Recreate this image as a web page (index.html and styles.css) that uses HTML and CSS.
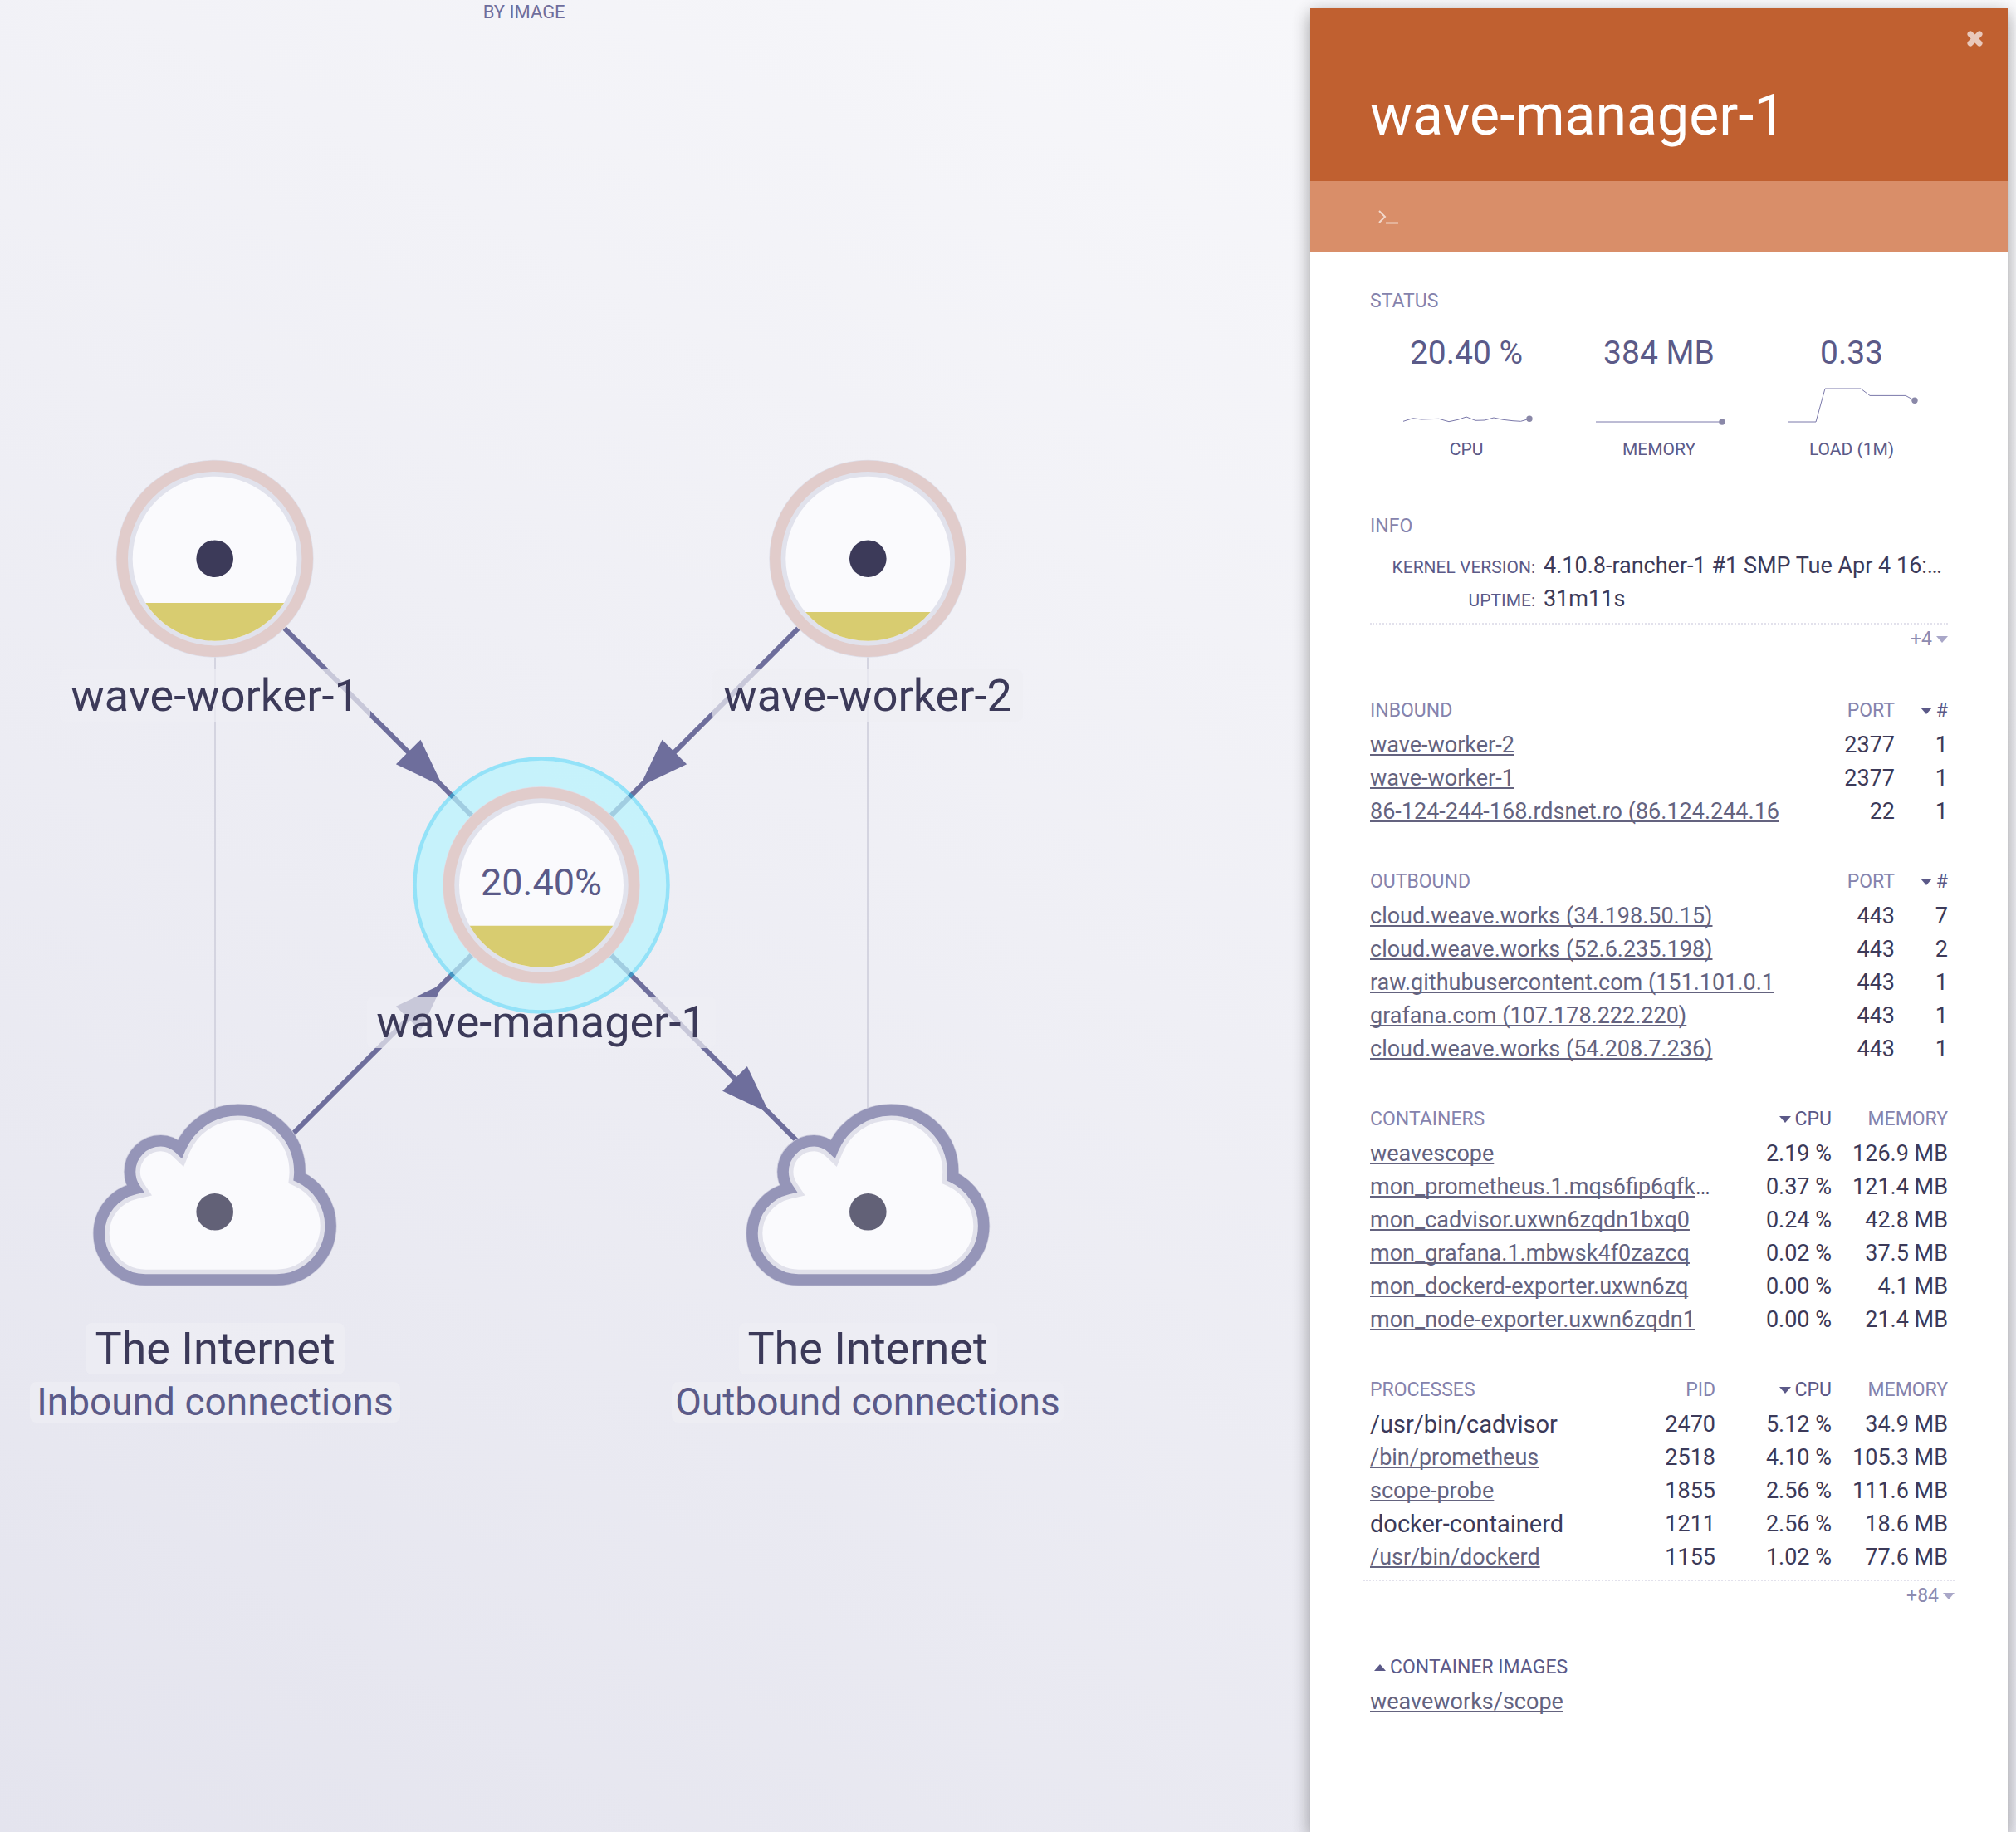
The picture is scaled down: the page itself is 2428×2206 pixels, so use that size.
FILE: index.html
```html
<!DOCTYPE html>
<html lang="en">
<head>
<meta charset="utf-8">
<title>wave-manager-1</title>
<link rel="stylesheet" href="styles.css">
</head>
<body>
<main class="app">
  <section class="graph" aria-label="Hosts">
    <nav class="topologies"><button type="button" class="topology">BY IMAGE</button></nav>
    <svg class="canvas" viewBox="0 0 1578 2206" role="img" aria-label="Host topology">
      <defs>
        <path id="cloud" d="M-1.25 .233Q-1.25 .44-1.104 .587-.957 .733-.75 .733H.667Q.908 .733 1.079 .562 1.25 .391 1.25 .15 1.25-.022 1.158-.164 1.065-.307 .914-.377 .917-.404 .917-.433 .917-.71 .722-.905 .527-1.1 .25-1.1 .041-1.1-.129-.984-.299-.867-.377-.68-.467-.767-.583-.767-.721-.767-.819-.669-.917-.571-.917-.433-.917-.333-.861-.25-1.033-.21-1.141-.076-1.25 .058-1.25 .233Z"/>
        <clipPath id="cloud-clip"><use href="#cloud"/></clipPath>
        <path id="arrow" d="M59 0L0-21V21Z"/>
        <g id="host">
          <circle class="halo" r="119"/>
          <circle class="host-ring" r="111.5"/>
          <circle class="face" r="99"/>
        </g>
        <g id="internet">
          <g transform="scale(111.5)">
            <use href="#cloud" class="cloud-halo"/>
            <use href="#cloud" class="face"/>
            <g clip-path="url(#cloud-clip)"><use href="#cloud" class="cloud-shadow"/></g>
            <use href="#cloud" class="cloud-border"/>
          </g>
          <circle class="cloud-dot" r="22.3"/>
        </g>
      </defs>

      <g class="thin-edges">
        <path d="M259 673V1459M1045 673V1459"/>
      </g>
      <g class="edges">
        <path d="M258.7 672.7L1045.3 1459.3M1045.3 672.7L258.7 1459.3"/>
        <use href="#arrow" transform="translate(491.7 905.5) rotate(45)"/>
        <use href="#arrow" transform="translate(812.3 905.5) rotate(135)"/>
        <use href="#arrow" transform="translate(491.7 1226.5) rotate(-45)"/>
        <use href="#arrow" transform="translate(885 1298.8) rotate(45)"/>
      </g>

      <g class="label-boxes">
        <rect x="72" y="806" width="374" height="63" rx="8"/>
        <rect x="858" y="806" width="374" height="63" rx="8"/>
        <rect x="442" y="1200" width="420" height="62" rx="8"/>
        <rect x="103" y="1593" width="312" height="62" rx="8"/>
        <rect x="36" y="1664" width="446" height="49" rx="8"/>
        <rect x="890" y="1593" width="311" height="62" rx="8"/>
        <rect x="809" y="1664" width="472" height="49" rx="8"/>
      </g>

      <g transform="translate(258.7 672.7)">
        <use href="#host"/>
        <path class="gauge" d="M-83.4 53.3H83.4A99 99 0 0 1-83.4 53.3Z"/>
        <circle class="host-dot" r="22.3"/>
      </g>
      <g transform="translate(1045.3 672.7)">
        <use href="#host"/>
        <path class="gauge" d="M-75.3 64.3H75.3A99 99 0 0 1-75.3 64.3Z"/>
        <circle class="host-dot" r="22.3"/>
      </g>
      <g transform="translate(652 1066)">
        <circle class="selection" r="150.3"/>
        <circle class="selection-ring" r="152.5"/>
        <use href="#host"/>
        <path class="gauge" d="M-86.2 48.7H86.2A99 99 0 0 1-86.2 48.7Z"/>
      </g>
      <use href="#internet" transform="translate(258.7 1459.3)"/>
      <use href="#internet" transform="translate(1045.3 1459.3)"/>

      <text class="node-value" x="652" y="1078">20.40%</text>
      <text class="node-name" x="259" y="856">wave-worker-1</text>
      <text class="node-name" x="1045" y="856">wave-worker-2</text>
      <text class="node-name" x="652" y="1249">wave-manager-1</text>
      <text class="node-name" x="259" y="1642">The Internet</text>
      <text class="node-minor" x="259" y="1704">Inbound connections</text>
      <text class="node-name" x="1045" y="1642">The Internet</text>
      <text class="node-minor" x="1045" y="1704">Outbound connections</text>
    </svg>
  </section>

  <aside class="details">
    <header class="details-header">
      <button type="button" class="close" aria-label="Close">
        <svg width="19" height="19" viewBox="0 0 19 19"><path d="M4 4L15 15M15 4L4 15"/></svg>
      </button>
      <h1>wave-manager-1</h1>
    </header>
    <div class="controls">
      <button type="button" class="terminal" aria-label="Open terminal">
        <svg width="26" height="18" viewBox="0 0 26 18"><path d="M1 2L8 9L1 16M9 16.5H24"/></svg>
      </button>
    </div>

    <div class="content">
      <section class="status">
        <h2>STATUS</h2>
        <div class="metrics">
          <div class="metric">
            <div class="metric-value">20.40 %</div>
            <svg class="spark" width="160" height="48" viewBox="0 0 160 48"><path d="M4 43.3L15.6 39.7L26 41L47 40.3L59 43.7L70 41.3L80 38L91 42.3L102 42L113 39L124 41.3L136 42.7L145.5 43.3L156 40.3"/><circle cx="156" cy="40.3" r="3.7"/></svg>
            <div class="metric-name">CPU</div>
          </div>
          <div class="metric">
            <div class="metric-value">384 MB</div>
            <svg class="spark" width="160" height="48" viewBox="0 0 160 48"><path d="M4 44H156"/><circle cx="156" cy="44" r="3.7"/></svg>
            <div class="metric-name">MEMORY</div>
          </div>
          <div class="metric">
            <div class="metric-value">0.33</div>
            <svg class="spark" width="160" height="48" viewBox="0 0 160 48"><path d="M4 44H37L48 4H91L102 12.4H145L156 18.3"/><circle cx="156" cy="18.3" r="3.7"/></svg>
            <div class="metric-name">LOAD (1M)</div>
          </div>
        </div>
      </section>

      <section>
        <h2>INFO</h2>
        <dl class="info">
          <dt>KERNEL VERSION:</dt><dd>4.10.8-rancher-1 #1 SMP Tue Apr 4 16:…</dd>
          <dt>UPTIME:</dt><dd>31m11s</dd>
        </dl>
        <button type="button" class="more">+4<svg class="caret" width="14" height="8" viewBox="0 0 14 8"><path d="M0 0H14L7 8Z"/></svg></button>
      </section>

      <table>
        <colgroup><col><col class="col-port"><col class="col-count"></colgroup>
        <thead><tr><th>INBOUND</th><th><button type="button">PORT</button></th><th class="sorted"><button type="button"><svg class="caret" width="14" height="8" viewBox="0 0 14 8"><path d="M0 0H14L7 8Z"/></svg>#</button></th></tr></thead>
        <tbody>
          <tr><td><a href="#">wave-worker-2</a></td><td>2377</td><td>1</td></tr>
          <tr><td><a href="#">wave-worker-1</a></td><td>2377</td><td>1</td></tr>
          <tr><td><a href="#">86-124-244-168.rdsnet.ro (86.124.244.16</a></td><td>22</td><td>1</td></tr>
        </tbody>
      </table>

      <table>
        <colgroup><col><col class="col-port"><col class="col-count"></colgroup>
        <thead><tr><th>OUTBOUND</th><th><button type="button">PORT</button></th><th class="sorted"><button type="button"><svg class="caret" width="14" height="8" viewBox="0 0 14 8"><path d="M0 0H14L7 8Z"/></svg>#</button></th></tr></thead>
        <tbody>
          <tr><td><a href="#">cloud.weave.works (34.198.50.15)</a></td><td>443</td><td>7</td></tr>
          <tr><td><a href="#">cloud.weave.works (52.6.235.198)</a></td><td>443</td><td>2</td></tr>
          <tr><td><a href="#">raw.githubusercontent.com (151.101.0.1</a></td><td>443</td><td>1</td></tr>
          <tr><td><a href="#">grafana.com (107.178.222.220)</a></td><td>443</td><td>1</td></tr>
          <tr><td><a href="#">cloud.weave.works (54.208.7.236)</a></td><td>443</td><td>1</td></tr>
        </tbody>
      </table>

      <table>
        <colgroup><col><col class="col-metric"><col class="col-metric"></colgroup>
        <thead><tr><th>CONTAINERS</th><th class="sorted"><button type="button"><svg class="caret" width="14" height="8" viewBox="0 0 14 8"><path d="M0 0H14L7 8Z"/></svg>CPU</button></th><th><button type="button">MEMORY</button></th></tr></thead>
        <tbody>
          <tr><td><a href="#">weavescope</a></td><td>2.19 %</td><td>126.9 MB</td></tr>
          <tr><td><a href="#">mon_prometheus.1.mqs6fip6qfk</a>…</td><td>0.37 %</td><td>121.4 MB</td></tr>
          <tr><td><a href="#">mon_cadvisor.uxwn6zqdn1bxq0</a></td><td>0.24 %</td><td>42.8 MB</td></tr>
          <tr><td><a href="#">mon_grafana.1.mbwsk4f0zazcq</a></td><td>0.02 %</td><td>37.5 MB</td></tr>
          <tr><td><a href="#">mon_dockerd-exporter.uxwn6zq</a></td><td>0.00 %</td><td>4.1 MB</td></tr>
          <tr><td><a href="#">mon_node-exporter.uxwn6zqdn1</a></td><td>0.00 %</td><td>21.4 MB</td></tr>
        </tbody>
      </table>

      <section>
        <table>
          <colgroup><col><col class="col-metric"><col class="col-metric"><col class="col-metric"></colgroup>
          <thead><tr><th>PROCESSES</th><th><button type="button">PID</button></th><th class="sorted"><button type="button"><svg class="caret" width="14" height="8" viewBox="0 0 14 8"><path d="M0 0H14L7 8Z"/></svg>CPU</button></th><th><button type="button">MEMORY</button></th></tr></thead>
          <tbody>
            <tr><td class="plain">/usr/bin/cadvisor</td><td>2470</td><td>5.12 %</td><td>34.9 MB</td></tr>
            <tr><td><a href="#">/bin/prometheus</a></td><td>2518</td><td>4.10 %</td><td>105.3 MB</td></tr>
            <tr><td><a href="#">scope-probe</a></td><td>1855</td><td>2.56 %</td><td>111.6 MB</td></tr>
            <tr><td class="plain">docker-containerd</td><td>1211</td><td>2.56 %</td><td>18.6 MB</td></tr>
            <tr><td><a href="#">/usr/bin/dockerd</a></td><td>1155</td><td>1.02 %</td><td>77.6 MB</td></tr>
          </tbody>
        </table>
        <button type="button" class="more more-wide">+84<svg class="caret" width="14" height="8" viewBox="0 0 14 8"><path d="M0 0H14L7 8Z"/></svg></button>
      </section>

      <table>
        <thead><tr><th class="sorted"><button type="button"><svg class="caret" width="14" height="8" viewBox="0 0 14 8"><path d="M0 8H14L7 0Z"/></svg>CONTAINER IMAGES</button></th></tr></thead>
        <tbody><tr><td><a href="#">weaveworks/scope</a></td></tr></tbody>
      </table>
    </div>
  </aside>
</main>
</body>
</html>
```
FILE: styles.css
```css
* { box-sizing: border-box; }

body {
  margin: 0;
  font-family: Roboto, "Liberation Sans", sans-serif;
  font-size: 27px;
  line-height: 40px;
  color: #3c3a59;
}

button {
  margin: 0;
  padding: 0;
  border: 0;
  background: none;
  font: inherit;
  color: inherit;
  cursor: pointer;
}

.app {
  display: grid;
  grid-template-columns: minmax(0, 1fr) minmax(0, 840px);
  min-height: 100vh;
  padding-right: 10px;
  background: linear-gradient(30deg, #e4e4ee 0%, #fafafc 100%);
}

/* Topology graph */
.graph { display: grid; align-items: start; }
.topologies, .canvas { grid-area: 1 / 1; }
.topologies { width: 80%; text-align: center; font-size: 22px; line-height: 30px; color: #6e6d9c; }
.topology { display: block; margin: 0 auto; }
.canvas { display: block; width: 100%; }

.thin-edges path { fill: none; stroke: #d4d4e0; stroke-width: 2; }
.edges { fill: #6e6e9c; }
.edges path { stroke: none; }
.edges > path { fill: none; stroke: #6e6e9c; stroke-width: 6; }
.label-boxes { fill: rgba(238, 238, 244, .7); }
.halo { fill: #dfdfe9; }
.host-ring { fill: #e1e2ec; stroke: #e1cccb; stroke-width: 13.6; }
.face { fill: #fafafd; }
.gauge { fill: #d8cc70; }
.host-dot { fill: #3c3a59; }
.cloud-dot { fill: #626177; }
.cloud-halo { fill: none; stroke: #cfcfdf; stroke-width: .136; }
.cloud-shadow { fill: none; stroke: #e1e1eb; stroke-width: .222; }
.cloud-border { fill: none; stroke: #9595b8; stroke-width: .122; }
.selection { fill: rgba(182, 244, 254, .71); }
.selection-ring { fill: none; stroke: rgba(0, 207, 255, .38); stroke-width: 4.5; }

.node-name, .node-minor, .node-value { text-anchor: middle; }
.node-name { font-size: 54px; fill: #3c3a59; }
.node-minor { font-size: 46px; fill: #5b5a88; }
.node-value { font-size: 45px; fill: #5b5a88; }

/* Details panel */
.details {
  margin-top: 10px;
  background: #fff;
  box-shadow: 0 6px 20px rgba(0, 0, 0, .16), 0 6px 20px rgba(0, 0, 0, .23);
}

.details-header {
  display: flex;
  flex-direction: column;
  padding: 27px 30px 39px 72px;
  background: #c06030;
  color: #fff;
}
.close { align-self: flex-end; height: 19px; line-height: 0; }
.close path { fill: none; stroke: #e9c9bc; stroke-width: 7; stroke-linecap: round; }
h1 { margin: 43px 0 0; font-size: 68px; line-height: 80px; font-weight: 400; }

.controls { display: flex; align-items: center; height: 86px; padding: 0 82px; background: #d98e69; }
.terminal { height: 18px; line-height: 0; }
.terminal path { fill: none; stroke: #f2d8cc; stroke-width: 2; }

.content { display: flex; flex-direction: column; gap: 44px; padding: 38px 72px; }

h2, th {
  margin: 0;
  font-size: 23px;
  line-height: 42px;
  font-weight: 400;
  color: #8583ad;
}

.status { padding-bottom: 16px; }
.metrics { display: grid; grid-template-columns: repeat(3, 1fr); padding-top: 18px; }
.metric { display: flex; flex-direction: column; align-items: center; color: #5b5a88; }
.metric-value { font-size: 39px; line-height: 46px; }
.metric-name { font-size: 21px; line-height: 24px; }
.spark { margin: 16px 0 17px; }
.spark path { fill: none; stroke: #7b79aa; }
.spark circle { fill: #8a88a8; }

.info {
  display: grid;
  grid-template-columns: 199px minmax(0, 1fr);
  column-gap: 10px;
  align-items: baseline;
  margin: 6px 0 9px;
}
.info dt { font-size: 21px; line-height: 36px; text-align: right; color: #5b5a88; }
.info dd { margin: 0; white-space: nowrap; }

.more {
  display: block;
  width: 100%;
  margin-bottom: 3px;
  border-top: 2px dotted #e2e1ec;
  font-size: 23px;
  line-height: 36px;
  text-align: right;
  color: #8d8bb0;
}
.more .caret { margin-right: 0; fill: #a9a7c8; }
.more-wide { width: calc(100% + 16px); margin: 7px -8px 3px; }

table { width: 100%; table-layout: fixed; border-collapse: collapse; }
th, td { padding: 0; text-align: right; white-space: nowrap; }
th:first-child, td:first-child { text-align: left; }
th button { display: block; width: 100%; text-align: inherit; }
td { height: 40px; line-height: 38px; }
.plain { font-size: 29px; }
.sorted { color: #5b5988; }
.col-port { width: 132px; }
.col-count { width: 64px; }
.col-metric { width: 140px; }
.caret { margin: 0 5px; fill: #5b5988; vertical-align: 3px; }

a {
  color: #64637f;
  text-decoration: underline;
  text-decoration-thickness: 2px;
  text-underline-offset: 2px;
  text-decoration-skip-ink: none;
}
```
